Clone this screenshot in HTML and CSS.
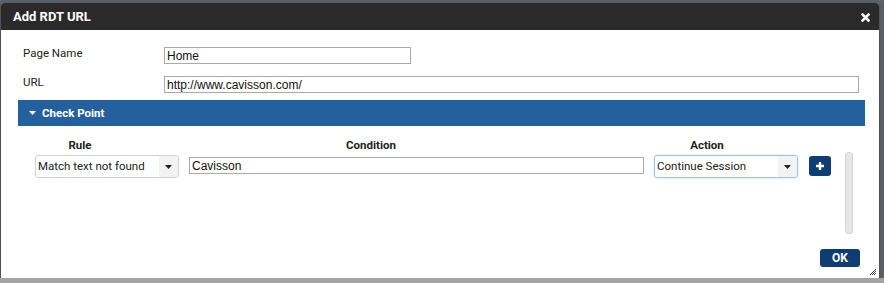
FILE: index.html
```html
<!DOCTYPE html>
<html lang="en">
  <head>
    <meta charset="UTF-8" />
    <title>Add RDT URL</title>
    <link rel="stylesheet" href="styles.css">
  </head>
  <body>
    <div class="dialog">
      <header class="titlebar">
        <h1>Add RDT URL</h1>
        <button class="luk" aria-label="Close">
          <svg width="9" height="9" viewBox="0 0 9 9"><path d="M1.5 1.5 L7.5 7.5 M7.5 1.5 L1.5 7.5" stroke="#fff" stroke-width="2.6" stroke-linecap="square"/></svg>
        </button>
      </header>

      <div class="indhold">
        <div class="felt">
          <label>Page Name</label>
          <input class="kort" type="text" value="Home" />
        </div>
        <div class="felt">
          <label>URL</label>
          <input class="lang" type="text" value="http://www.cavisson.com/" />
        </div>

        <div class="bjaelke">
          <svg width="7" height="4" viewBox="0 0 7 4"><path d="M0 0 H7 L3.5 4 Z" fill="#fff"/></svg>
          <span>Check Point</span>
        </div>

        <div class="tabel">
          <div class="overskrifter">
            <span>Rule</span>
            <span>Condition</span>
            <span>Action</span>
          </div>
          <div class="raekke">
            <div class="vaelg">
              <span class="tekst">Match text not found</span>
              <span class="pil"><svg width="7" height="4" viewBox="0 0 7 4"><path d="M0 0 H7 L3.5 4 Z" fill="#222"/></svg></span>
            </div>
            <input class="betingelse" type="text" value="Cavisson" />
            <div class="vaelg aktiv">
              <span class="tekst">Continue Session</span>
              <span class="pil"><svg width="7" height="4" viewBox="0 0 7 4"><path d="M0 0 H7 L3.5 4 Z" fill="#222"/></svg></span>
            </div>
            <button class="plus" aria-label="Add">
              <svg width="10" height="10" viewBox="0 0 10 10"><path d="M5 1 V9 M1 5 H9" stroke="#fff" stroke-width="2.4"/></svg>
            </button>
            <div class="rulle"></div>
          </div>
        </div>

        <div class="bund">
          <button class="ok">OK</button>
        </div>
      </div>

      <svg class="greb" width="8" height="8" viewBox="0 0 8 8"><path d="M7 1 L1 7 M7 3 L3 7 M7 5 L5 7" stroke="#444" stroke-width="1"/></svg>
    </div>
  </body>
</html>
```

FILE: styles.css
```css
body {
  margin: 0;
  background-color: #5c6167;
  font-family: Roboto, "Liberation Sans", sans-serif;
  height: 283px;
  overflow: hidden;
  border-bottom: 5px solid #a2a4a6;
  box-sizing: border-box;
}

.dialog {
  position: relative;
  margin: 3px 0 0 1px;
  width: 878px;
  height: 275px;
  background-color: white;
  border-radius: 3px 3px 0 0;
  box-shadow: 0 1px 3px rgba(0, 0, 0, 0.4);
}

.titlebar {
  height: 27px;
  background-color: #2a2a2a;
  border-radius: 3px 3px 0 0;
  display: flex;
  align-items: center;
  justify-content: space-between;
  padding: 0 9px 0 12px;
}

.titlebar h1 {
  margin: 0;
  color: white;
  font-size: 13px;
  font-weight: bold;
}

.luk {
  border: none;
  background: none;
  padding: 0;
  display: flex;
  margin-top: 1px;
}

.indhold {
  padding: 17px 14px 0 17px;
}

.felt {
  display: flex;
  align-items: center;
  margin-bottom: 12px;
}

.felt label {
  width: 141px;
  padding-left: 5px;
  font-size: 11.5px;
  color: #222;
  margin-top: -6px;
}

input {
  font-family: "Liberation Sans", Arial, sans-serif;
  font-size: 12px;
  color: #111;
  border: 1px solid #a9a9a9;
  height: 17px;
  padding: 0 2px;
  box-sizing: border-box;
  outline: none;
}

.kort {
  width: 247px;
}

.lang {
  width: 695px;
}

.felt:nth-child(2) {
  margin-bottom: 7px;
}

.bjaelke {
  height: 26px;
  background-color: #25609e;
  display: flex;
  align-items: center;
  gap: 6px;
  padding-left: 11px;
  color: white;
  font-size: 11.5px;
  font-weight: bold;
}

.overskrifter {
  display: grid;
  grid-template-columns: 124px 458px 214px;
  text-align: center;
  font-size: 11.5px;
  font-weight: bold;
  color: #222;
  padding-top: 12px;
  height: 17px;
}

.raekke {
  display: flex;
  align-items: flex-start;
  margin-left: 17px;
  gap: 10px;
}

.vaelg {
  width: 144px;
  height: 23px;
  box-sizing: border-box;
  border: 1px solid #d2d2d2;
  border-radius: 3px;
  display: flex;
  font-size: 11.5px;
  color: #222;
  overflow: hidden;
}

.vaelg .tekst {
  flex: 1;
  padding-left: 2px;
  line-height: 20px;
}

.vaelg .pil {
  width: 19px;
  background-color: #f3f3f3;
  display: flex;
  align-items: center;
  justify-content: center;
}

.vaelg.aktiv {
  border-color: #9ec3e6;
  box-shadow: 0 0 2px #b8d4ee;
}

.betingelse {
  width: 455px;
  margin-top: 2px;
}

.plus {
  width: 22px;
  height: 20px;
  margin-top: 1px;
  margin-left: 1px;
  border: none;
  border-radius: 3px;
  background-color: #0e3d74;
  display: flex;
  align-items: center;
  justify-content: center;
  padding: 0;
}

.rulle {
  width: 6px;
  height: 80px;
  margin-top: -3px;
  margin-left: 4px;
  background-color: #e6e6e6;
  border: 1px solid #d8d8d8;
  border-radius: 3px;
}

.bund {
  display: flex;
  justify-content: flex-end;
  padding-top: 15px;
  padding-right: 5px;
}

.ok {
  width: 40px;
  height: 18px;
  border: none;
  border-radius: 3px;
  background-color: #0e3d74;
  color: white;
  font-family: Roboto, sans-serif;
  font-size: 12px;
  font-weight: bold;
  padding: 0;
}

.greb {
  position: absolute;
  right: 2px;
  bottom: 2px;
}
```
